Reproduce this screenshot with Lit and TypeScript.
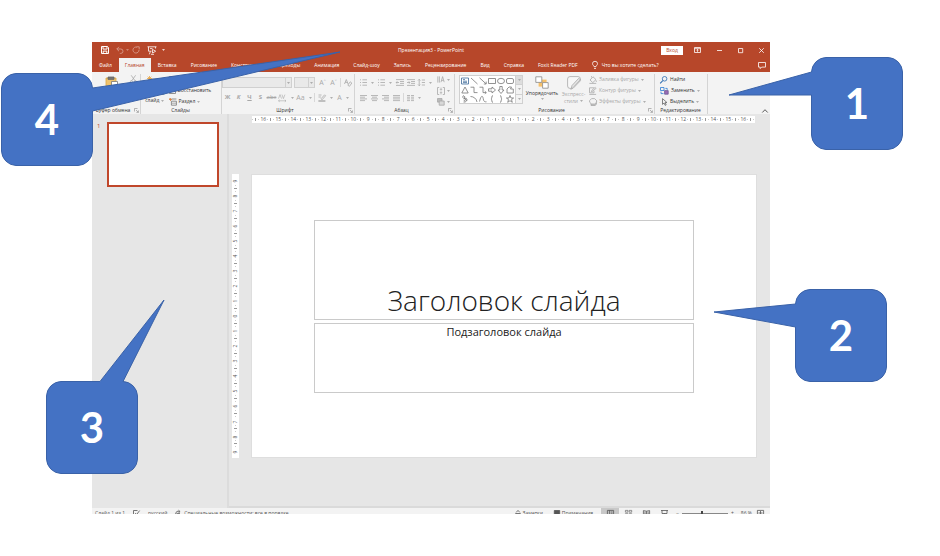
import { LitElement, html, svg, css, nothing, TemplateResult } from "lit";
import { customElement } from "lit/decorators.js";

const base = css`
  * { box-sizing: border-box; }
  button, select, input { font: inherit; color: inherit; margin: 0; padding: 0; border: 0; background: none; border-radius: 0; }
  svg { display: block; flex: none; fill: none; stroke: currentColor; overflow: visible; }
  button { display: flex; align-items: center; white-space: nowrap; flex: none; line-height: 7px; }
`;

const ico = (w: number, h: number, body: TemplateResult, cls = "") =>
  html`<svg class=${cls} width=${w} height=${h} viewBox="0 0 ${w} ${h}" stroke-width="0.8" aria-hidden="true">${body}</svg>`;
const caret = ico(3, 2, svg`<path d="M0 0.2h3L1.5 1.8z" fill="currentColor" stroke="none"/>`, "caret");

const I = {
  save: ico(8, 8, svg`<path d="M0.5 0.5h6l1 1v6h-7z M2 0.5v2.6h4v-2.6 M2.2 7.5v-2.4h3.6v2.4" stroke-width="1"/>`),
  undo: ico(8, 8, svg`<path d="M3 0.8L0.8 3l2.2 2.2 M0.8 3h4a2.2 2.2 0 0 1 0 4.4h-1" stroke-width="0.9"/>`),
  redo: ico(8, 8, svg`<path d="M5 1.2a3 3 0 1 0 2 2.8 M4.6 0.8h2.6v2.6" stroke-width="0.9"/>`),
  show: ico(10, 9, svg`<path d="M0.5 0.8h9 M1.5 0.8v4.4h3 M8.5 0.8v1.700 M3.400 5.500l-1 2.800 M3 2.600h2.500"/><path d="M5.500 3.400l3.200 1.800-3.200 1.800z"/><path d="M4 8.300h3" />`),
  display: ico(7, 6, svg`<path d="M0.5 0.5h6v5h-6z M0.5 1.7h6 M3.5 4.8v-2.2 M2.5 3.4l1-1 1 1"/>`),
  min: ico(5, 5, svg`<path d="M0 2.5h5"/>`),
  max: ico(5, 5, svg`<path d="M0.5 0.5h4.2v4.2h-4.2z"/>`),
  close: ico(5, 5, svg`<path d="M0.2 0.2l4.6 4.6M4.8 0.2l-4.6 4.6"/>`),
  bulb: ico(6, 8, svg`<path d="M2 5.6c0-1-1.5-1.4-1.5-3a2.5 2.3 0 0 1 5 0c0 1.6-1.5 2-1.5 3z M2 7.4h2"/>`),
  comment: ico(8, 7, svg`<path d="M0.5 0.5h7v4.6h-3.8l-1.5 1.5v-1.5h-1.7z"/>`),
  paste: ico(14, 14, svg`<path d="M1 2h10v11h-10z" fill="#f0c36d" stroke="#d9a441"/><path d="M3 1h6v2.4h-6z" fill="#777" stroke="#666"/><path d="M6.5 5.5h6v8h-6z" fill="#fff" stroke="#777"/>`),
  cut: ico(7, 8, svg`<path d="M1.2 0.3l3.8 5.4M5.6 0.3l-3.8 5.4"/><circle cx="1.4" cy="6.6" r="1"/><circle cx="5.4" cy="6.6" r="1"/>`),
  slide: ico(15, 14, svg`<path d="M2.5 3h12v9h-12z" fill="#fff" stroke="#888"/><path d="M4.5 5.5h8M4.5 8h8" stroke="#888"/><path d="M2.5 0v5M0 2.5h5M0.7 0.7l3.6 3.6M4.3 0.7l-3.6 3.6" stroke="#e8a33d"/>`),
  layout: ico(7, 7, svg`<path d="M0.5 0.5h6v5.5h-6zM0.5 2.2h6M3.5 2.2v3.8" stroke="#777"/>`),
  reset: ico(7, 7, svg`<path d="M0.5 2.5h6v4h-6z" stroke="#777"/><path d="M4.5 0.5a2 2 0 0 0-3 1" stroke="#2b7cd3"/>`),
  section: ico(8, 8, svg`<path d="M2.4 1h5M2.4 3.2h5v4h-5z" stroke="#777"/><path d="M2.4 5.2h5" stroke="#999"/><path d="M0 0.5l1.5 1M1.5 0v3M0 1.5h3" stroke="#d9803d"/>`),
  clear: ico(8, 8, svg`<path d="M0.5 5l1.8-4.5 1.8 4.5M1.2 3.4h2.2"/><path d="M3.8 6.2l2.4-3.4 1.6 1.2-2.3 3.3z"/>`),
  spacing: ico(9, 8, svg`<path d="M0.5 4.6l1.5-4 1.5 4M4 0.6l1.4 4 1.5-4M0.5 6.8h7.5M1.7 5.8l-1.2 1 1.2 1M6.8 5.8l1.2 1-1.2 1" stroke-width="0.6"/>`),
  pen: ico(8, 8, svg`<path d="M0.5 1h3M0.5 3h2.4M3 4.8l3.6-4 1 1-3.6 4z"/><path d="M0.4 7h7" stroke-width="1.4"/>`),
  bullets: ico(7, 7, svg`<path d="M0 0.8h1M0 3.5h1M0 6.2h1M2.4 0.8h4.6M2.4 3.5h4.6M2.4 6.2h4.6"/>`),
  indent: ico(8, 7, svg`<path d="M0 0.6h8M4 2.5h4M4 4.4h4M0 6.4h8M3 3.5h-3M1.3 2.3l-1.2 1.2 1.2 1.2"/>`),
  outdent: ico(8, 7, svg`<path d="M0 0.6h8M4 2.5h4M4 4.4h4M0 6.4h8M0 3.5h3M1.8 2.3l1.2 1.2-1.2 1.2"/>`),
  lines: ico(7, 7, svg`<path d="M1.2 0.3v6.4M0 1.5l1.2-1.2 1.2 1.2M0 5.5l1.2 1.2 1.2-1.2M3.8 1h3.2M3.8 3.5h3.2M3.8 6h3.2"/>`),
  left: ico(7, 6, svg`<path d="M0 0.5h7M0 2.2h5M0 3.9h7M0 5.6h5"/>`),
  center: ico(7, 6, svg`<path d="M0 0.5h7M1 2.2h5M0 3.9h7M1 5.6h5"/>`),
  right: ico(7, 6, svg`<path d="M0 0.5h7M2 2.2h5M0 3.9h7M2 5.6h5"/>`),
  just: ico(7, 6, svg`<path d="M0 0.5h7M0 2.2h7M0 3.9h7M0 5.6h7"/>`),
  cols: ico(7, 6, svg`<path d="M0 0.5h3M0 2.2h3M0 3.9h3M0 5.6h3M4 0.5h3M4 2.2h3M4 3.9h3M4 5.6h3"/>`),
  tdir: ico(8, 7, svg`<path d="M0.8 0.4v6.2M2.4 0.4v6.2M4 6.2l1.6-5.6 1.6 5.6M4.5 4.4h2.2"/>`),
  valign: ico(8, 8, svg`<path d="M2.2 0.5h-1.7v7h1.7M5.8 0.5h1.7v7h-1.7M4 0.6v2.6M3 2.2l1 1 1-1M4 7.4v-2.6M3 5.8l1-1 1 1"/>`),
  smart: ico(8, 8, svg`<path d="M0.5 0.5h4.5v3.6h-4.5z" fill="#bbb"/><path d="M2.2 3h5v4.2h-5z" fill="#d8d8d8"/>`),
  arrange: ico(14, 13, svg`<path d="M3.6 3.6h8v7h-8z" fill="#f5c06a" stroke="none"/><path d="M0.8 0.8h6v5.6h-6zM7.6 6.6h5.6v5.6h-5.6z" fill="#fff" stroke="#888"/>`),
  styles: ico(14, 14, svg`<path d="M10 0.6h-7a2.4 2.4 0 0 0-2.4 2.4v7a2.4 2.4 0 0 0 2.4 2.4h3l7.4-7.6v-1.8a2.4 2.4 0 0 0-2.4-2.4z" fill="#f7f7f7"/><path d="M13.5 3.5l-6.5 7-3 3 1-4 6.5-7z" fill="#e4e4e4"/>`),
  fill: ico(8, 8, svg`<path d="M1 4l3-3.2 3 2.8-3.2 3zM0.4 7.4h6.8M2.5 1.4v-1.2M7.3 4.5v1.4"/>`),
  outline: ico(8, 8, svg`<path d="M5 0.8h-4.5v5h4.5v-1.8M2.4 4.6l0.4-1.2 3.4-3 0.9 0.9-3.3 2.9zM0.3 7.4h6.8"/>`),
  effects: ico(8, 8, svg`<path d="M2 2.5h5.4v3.8l-1.4 1.2h-4z" fill="#c4c4c4"/><path d="M0.6 2.6l2-2h3l2 2v1.6l-2 1.8h-3l-2-1.8z" fill="#f3f3f3"/>`),
  find: ico(8, 8, svg`<circle cx="4.6" cy="2.8" r="2.3"/><path d="M2.9 4.5l-2.7 2.9" stroke-width="1.1"/>`, "blue"),
  replace: ico(9, 8, svg`<path d="M0.5 0.5h3.5v3h-3.5z" stroke="#2b7cd3"/><path d="M4.6 3.6h3.6v3.6h-3.6z" fill="#9a6bb5" stroke="#6b5b95"/><path d="M5.4 1.4h1.8v1.5M1 4.6v2h2.5" stroke="#2b7cd3"/>`),
  select: ico(8, 8, svg`<path d="M2.5 0.6v5.8l1.5-1.4 1.2 2.4 1-0.5-1.2-2.3h2z" stroke="#666"/>`),
  launcher: ico(5, 5, svg`<path d="M0.5 3.5v-3h3M2 2l2.3 2.3M4.4 2.4v2h-2" stroke-width="0.6"/>`),
  up: ico(6, 4, svg`<path d="M0.3 3.5l2.7-2.8 2.7 2.8"/>`),
  spell: ico(7, 7, svg`<path d="M4.5 0.5h-4v6h5v-2M2.2 3l1.4 1.6 3-4"/>`),
  access: ico(7, 7, svg`<path d="M4.5 1.5a3 3 0 1 0 2 3M3.5 0.2l1.6 1.4-1.6 1.2M1.5 3.4h3.5"/>`),
  notes: ico(6, 6, svg`<path d="M0.3 3.5h5.4M1.2 2.4l1.8-2 1.8 2M0.3 5.2h5.4"/>`),
  bubble: ico(6, 6, svg`<path d="M0.3 0.5h5.4v4h-3l-1.2 1.2v-1.2h-1.2z" fill="currentColor"/>`),
  v1: ico(7, 6, svg`<path d="M0.4 0.4h6.2v5.2h-6.2zM2.4 0.4v5.2M3.6 2h2M3.6 3.8h2"/>`),
  v2: ico(7, 6, svg`<path d="M0.4 0.4h2.5v1.8h-2.5zM4.2 0.4h2.5v1.8h-2.5zM0.4 3.7h2.5v1.8h-2.5zM4.2 3.7h2.5v1.8h-2.5z" stroke-width="0.6"/>`),
  v3: ico(7, 6, svg`<path d="M0.4 0.6l3.1 0.6 3.1-0.6v4.4l-3.1 0.6-3.1-0.6zM3.5 1.2v4.4M1.3 2.2h1.4M4.4 2.2h1.4M1.3 3.6h1.4M4.4 3.6h1.4"/>`),
  v4: ico(7, 6, svg`<path d="M0 0.5h7M1 0.5v3h5v-3M3.5 3.5v1.5"/>`),
  fit: ico(7, 6, svg`<path d="M0.4 0.4h6.2v5.2h-6.2zM3.5 1v4M1.4 3h4.2"/>`),
};

const shapes = [
  svg`<path d="M0.5 1h7v6h-7z" stroke="#3d6a99"/><path d="M2 2.6h2M2 4.2h4M2 5.6h4" stroke="#3d6a99"/>`,
  svg`<path d="M1 1l6.5 6"/>`,
  svg`<path d="M0.5 0.8l6.5 6M7.2 4.6v2.4h-2.4"/>`,
  svg`<path d="M0.5 1.5h7v5h-7z"/>`,
  svg`<ellipse cx="4" cy="4" rx="3.5" ry="2.7"/>`,
  svg`<rect x="0.5" y="1.5" width="7" height="5" rx="1.5"/>`,
  svg`<path d="M4 1l3.2 6h-6.4z"/>`,
  svg`<path d="M0.5 1.2h3.5v5.4h3.5"/>`,
  svg`<path d="M0.5 1.2h3.5v5.4h3.2M5.8 5.2l1.5 1.4-1.5 1.2"/>`,
  svg`<path d="M0.5 2.8h3.5v-1.8l3.5 3-3.5 3v-1.8h-3.5z"/>`,
  svg`<path d="M2.8 0.5v3.5h-1.8l3 3.5 3-3.5h-1.8v-3.5z"/>`,
  svg`<path d="M1 3l2-2h2.5l-1 2h2.8v4h-6.3z"/>`,
  svg`<path d="M3 0.5a1.5 1.5 0 1 0 1 2.8a1.5 1.5 0 1 1-1 1.4M4.5 7h-2M3.6 1v3l2.5 1.5"/>`,
  svg`<path d="M0.5 1.5c3 0 6 2 6.5 5.5"/>`,
  svg`<path d="M0.5 6.5c2-8 3.5-5 3.8-2.5s1.5 3 3.2 2.8"/>`,
  svg`<path d="M5 0.5c-1.8 0-0.5 3-2 3.5 1.5 0.5 0.2 3.5 2 3.5"/>`,
  svg`<path d="M3 0.5c1.8 0 0.5 3 2 3.5-1.5 0.5-0.2 3.5-2 3.5"/>`,
  svg`<path d="M4 0.5l1 2.5h2.6l-2.1 1.6 0.8 2.7-2.3-1.6-2.3 1.6 0.8-2.7-2.1-1.6h2.6z"/>`,
];

@customElement("title-bar")
class TitleBar extends LitElement {
  static styles = [base, css`
    :host { display: block; background: #b7472a; color: #fff; font-size: 5px; line-height: 7px; }
    .row { display: grid; grid-template-columns: 1fr auto 1fr; align-items: center; height: 16px; }
    .quick { display: flex; align-items: center; gap: 3px; padding-left: 9px; }
    .quick button { gap: 2px; min-width: 12px; }
    .dim { opacity: 0.45; }
    .wins { display: flex; justify-content: flex-end; align-items: center; padding-right: 6px; gap: 16px; }
    .login { background: #fff; color: #b7472a; height: 9px; width: 22px; justify-content: center; margin-right: -5px; }
    .tabs { display: flex; height: 14px; align-items: stretch; padding: 0 4px 0 0; }
    .tabs button { padding: 0 7px; }
    .tabs .on { background: #f3f3f3; color: #b7472a; padding: 0 6px; }
    .tabs .ask { gap: 4px; }
    .tabs .talk { margin-left: auto; padding: 0; }
  `];
  render() {
    const tabs = ["Файл", "Главная", "Вставка", "Рисование", "Конструктор", "Переходы", "Анимация", "Слайд-шоу", "Запись", "Рецензирование", "Вид", "Справка", "Foxit Reader PDF"];
    return html`
      <header class="row">
        <div class="quick">
          <button aria-label="Сохранить">${I.save}</button>
          <button class="dim" aria-label="Отменить">${I.undo}${caret}</button>
          <button class="dim" aria-label="Вернуть">${I.redo}</button>
          <button aria-label="Показ слайдов">${I.show}</button>
          <button aria-label="Настройка">${caret}</button>
        </div>
        <span>Презентация3 - PowerPoint</span>
        <div class="wins">
          <button class="login">Вход</button>
          <button aria-label="Лента">${I.display}</button>
          <button aria-label="Свернуть">${I.min}</button>
          <button aria-label="Развернуть">${I.max}</button>
          <button aria-label="Закрыть">${I.close}</button>
        </div>
      </header>
      <nav class="tabs">
        ${tabs.map((t) => html`<button class=${t === "Главная" ? "on" : ""}>${t}</button>`)}
        <button class="ask">${I.bulb}Что вы хотите сделать?</button>
        <button class="talk" aria-label="Примечания">${I.comment}</button>
      </nav>`;
  }
}

@customElement("ribbon-bar")
class RibbonBar extends LitElement {
  static styles = [base, css`
    :host { display: grid; grid-template-columns: 49fr 81fr 133fr 100fr 200fr 53fr 62fr; height: 42px; padding-top: 2px;
      background: #f3f3f3; color: #333; font-size: 5px; line-height: 7px; }
    .group { display: flex; flex-direction: column; border-right: 1px solid #d4d4d4; min-width: 0; }
    .body { display: flex; height: 33px; }
    .name { display: flex; align-items: center; height: 7px; padding-right: 1px; }
    .name span { flex: 1; text-align: center; white-space: nowrap; }
    .name button { color: #888; }
    .off { color: #a8a8a8; }
    .big { flex-direction: column; gap: 1px; padding-top: 2px; }
    .rows { display: grid; grid-template-rows: repeat(3, 1fr); align-items: center; }
    .rows button { gap: 2px; }
    .two { display: flex; flex-direction: column; gap: 4px; padding-top: 3px; }
    .line { display: flex; align-items: center; height: 11px; }
    .b { width: 11px; justify-content: center; font-size: 6px; }
    .d { width: 18px; justify-content: center; gap: 4px; }
    .caret { color: #999; }
    .pipe { width: 1px; height: 9px; background: #d8d8d8; margin: 0 1px; }
    .clipboard { padding-left: 9px; gap: 7px; }
    .clipboard .rows button { align-self: start; padding-top: 1px; }
    .slides { padding-left: 4px; gap: 4px; }
    .new { gap: 0; }
    .new span { display: flex; align-items: center; gap: 2px; }
    .combo { display: flex; height: 11px; border: 1px solid #d0d0d0; background: #e9e9e9; margin-right: 2px; }
    .combo select { appearance: none; width: 100%; }
    .combo i { display: flex; align-items: center; justify-content: center; width: 6px; flex: none; border-left: 1px solid #d0d0d0; }
    .face { width: 70px; }
    .size { width: 21px; }
    .k { font-weight: 700; }
    .it { font-style: italic; }
    .un { text-decoration: underline; }
    .st { text-decoration: line-through; }
    .lg { font-size: 7px; }
    .para { padding-left: 3px; }
    .draw { padding-left: 4px; }
    .gallery { display: flex; width: 64px; height: 29px; margin-top: 1px; border: 1px solid #d0d0d0; background: #fff; color: #777; }
    .cells { flex: 1; display: grid; grid-template-columns: repeat(6, 1fr); grid-template-rows: repeat(3, 1fr); place-items: center; }
    .scroll { display: grid; width: 7px; background: #f3f3f3; border-left: 1px solid #d0d0d0; }
    .scroll button { justify-content: center; border-bottom: 1px solid #d0d0d0; }
    .scroll button:first-child { background: #ddd; }
    .scroll button:last-child { border-bottom: 0; }
    .arr { margin-left: 2px; width: 34px; }
    .exp { width: 29px; margin-right: 1px; }
    .exp span { display: flex; align-items: center; gap: 2px; line-height: 6px; }
    .edit { padding-left: 5px; }
    .blue { color: #2b6cb0; }
    .end { display: flex; justify-content: flex-end; align-items: flex-end; padding: 0 2px 1px 0; }
  `];

  group(name: string, cls: string, body: TemplateResult, launcher = true) {
    return html`<section class="group"><div class="body ${cls}">${body}</div>
      <div class="name"><span>${name}</span>${launcher ? html`<button aria-label="${name}: параметры">${I.launcher}</button>` : nothing}</div></section>`;
  }
  b(label: string, content: unknown, cls = "") {
    return html`<button class="b ${cls}" aria-label=${label}>${content}</button>`;
  }
  d(label: string, content: unknown, cls = "") {
    return html`<button class="d ${cls}" aria-label=${label}>${content}${caret}</button>`;
  }

  render() {
    return html`
      ${this.group("Буфер обмена", "clipboard", html`
        <button class="big">${I.paste}<span>Вставить</span></button>
        <div class="rows off"><button aria-label="Вырезать">${I.cut}</button></div>`)}
      ${this.group("Слайды", "slides", html`
        <button class="big new">${I.slide}<span>Создать</span><span>слайд ${caret}</span></button>
        <div class="rows">
          <button>${I.layout}Макет${caret}</button>
          <button>${I.reset}Восстановить</button>
          <button>${I.section}Раздел${caret}</button>
        </div>`, false)}
      ${this.group("Шрифт", "off", html`
        <div class="two">
          <div class="line">
            <label class="combo face"><select aria-label="Шрифт"></select><i>${caret}</i></label>
            <label class="combo size"><select aria-label="Размер"></select><i>${caret}</i></label>
            ${this.b("Увеличить", "A\u02c4", "lg")}${this.b("Уменьшить", "A\u02c5", "lg")}
            <span class="pipe"></span>${this.b("Очистить", I.clear)}
          </div>
          <div class="line">
            ${this.b("Полужирный", "Ж", "k")}${this.b("Курсив", "К", "it k")}${this.b("Подчеркнутый", "Ч", "un k")}${this.b("Тень", "S", "k")}${this.b("Зачеркнутый", "abc", "st")}
            ${this.d("Интервал", I.spacing)}${this.d("Регистр", "Aa", "lg")}<span class="pipe"></span>
            ${this.d("Выделение", I.pen)}${this.d("Цвет", "A", "lg")}
          </div>
        </div>`)}
      ${this.group("Абзац", "off para", html`
        <div class="two">
          <div class="line">${this.d("Маркеры", I.bullets)}${this.d("Нумерация", I.bullets)}${this.b("Уменьшить отступ", I.indent)}${this.b("Увеличить отступ", I.outdent)}${this.d("Интервал", I.lines)}</div>
          <div class="line">${this.b("Слева", I.left)}${this.b("По центру", I.center)}${this.b("Справа", I.right)}${this.b("По ширине", I.just)}<span class="pipe"></span>${this.d("Колонки", I.cols)}</div>
        </div>
        <div class="rows">${this.d("Направление", I.tdir)}${this.d("Выравнивание", I.valign)}${this.d("SmartArt", I.smart)}</div>`)}
      ${this.group("Рисование", "draw", html`
        <div class="gallery">
          <div class="cells">${shapes.map((s) => ico(8, 8, s))}</div>
          <div class="scroll">${["Вверх", "Вниз", "Все"].map((l) => html`<button aria-label=${l}>${caret}</button>`)}</div>
        </div>
        <button class="big arr">${I.arrange}<span>Упорядочить</span>${caret}</button>
        <button class="big exp off">${I.styles}<span>Экспресс-</span><span>стили ${caret}</span></button>
        <div class="rows off">
          <button>${I.fill}Заливка фигуры ${caret}</button>
          <button>${I.outline}Контур фигуры ${caret}</button>
          <button>${I.effects}Эффекты фигуры ${caret}</button>
        </div>`)}
      ${this.group("Редактирование", "edit", html`
        <div class="rows">
          <button>${I.find}Найти</button>
          <button>${I.replace}Заменить ${caret}</button>
          <button>${I.select}Выделить ${caret}</button>
        </div>`, false)}
      <div class="end"><button aria-label="Свернуть ленту">${I.up}</button></div>`;
  }
}

@customElement("ruler-strip")
class RulerStrip extends LitElement {
  static properties = { max: { type: Number }, vertical: { type: Boolean, reflect: true } };
  declare max: number;
  declare vertical: boolean;
  static styles = css`
    :host { display: flex; background: #fff; color: #555; font: 5px/7px "Open Sans", sans-serif; height: 7px; }
    span { flex: 1 1 0; display: flex; align-items: center; justify-content: center; min-width: 0; min-height: 0; }
    .tick { gap: 2px; }
    .tick::before, .tick::after { content: ""; width: 1px; height: 1px; background: #ccc; }
    i { width: 1px; height: 3px; background: #999; }
    :host([vertical]) { flex-direction: column; width: 7px; height: auto; padding: 3px 0; }
    :host([vertical]) .tick { flex-direction: column; }
    :host([vertical]) i { width: 3px; height: 1px; }
    :host([vertical]) .num { writing-mode: vertical-rl; transform: rotate(180deg); }
  `;
  render() {
    const nums = Array.from({ length: this.max * 2 + 1 }, (_, k) => Math.abs(k - this.max));
    const tick = html`<span class="tick"><i></i></span>`;
    return html`${this.vertical ? nothing : tick}${nums.map((n, k) => html`${k ? tick : nothing}<span class="num">${n}</span>`)}${this.vertical ? nothing : tick}`;
  }
}

@customElement("status-bar")
class StatusBar extends LitElement {
  static styles = [base, css`
    :host { display: block; height: 6px; overflow: hidden; background: #f3f3f3; color: #555; font-size: 5px; line-height: 7px; }
    .row { display: flex; align-items: center; height: 10px; padding: 0 6px 0 3px; white-space: nowrap; }
    .row button { gap: 2px; }
    .lang { margin: 0 8px; }
    .right { display: flex; align-items: center; margin-left: auto; }
    .memo { margin-right: 11px; }
    .note { margin-right: 8px; }
    .view { width: 18px; height: 10px; justify-content: center; }
    .view.on { background: #c8c8c8; }
    .zoom { appearance: none; width: 46px; height: 6px; margin: 0 3px; background: linear-gradient(#888, #888) center / 100% 1px no-repeat; }
    .zoom::-webkit-slider-thumb { appearance: none; width: 2px; height: 5px; background: #444; }
    .pct { margin: 0 5px 0 7px; }
    .minus { margin-left: 3px; }
  `];
  render() {
    return html`<footer class="row">
      <span>Слайд 1 из 1</span>
      <button class="lang" aria-label="Правописание">${I.spell}</button>
      <button>русский</button>
      <button class="lang">${I.access}Специальные возможности: все в порядке</button>
      <div class="right">
        <button class="memo">${I.notes}Заметки</button>
        <button class="note">${I.bubble}Примечания</button>
        <button class="view on" aria-label="Обычный">${I.v1}</button>
        <button class="view" aria-label="Сортировщик">${I.v2}</button>
        <button class="view" aria-label="Чтение">${I.v3}</button>
        <button class="view" aria-label="Показ">${I.v4}</button>
        <button class="minus">−</button>
        <input class="zoom" type="range" min="0" max="100" value="44" aria-label="Масштаб" />
        <button>+</button>
        <span class="pct">86 %</span>
        <button aria-label="По размеру окна">${I.fit}</button>
      </div>
    </footer>`;
  }
}

@customElement("call-out")
class CallOut extends LitElement {
  static properties = { label: {}, outline: {} };
  declare label: string;
  declare outline: string;
  static styles = css`
    :host { display: block; width: 92px; height: 93px; }
    svg { display: block; width: 100%; height: 100%; overflow: visible; }
    path { fill: #4472c4; stroke: #3a62a8; stroke-width: 1; stroke-linejoin: round; }
    text { fill: #fff; font: 700 42px Lato, "Open Sans", sans-serif; text-anchor: middle; }
  `;
  render() {
    return html`<svg viewBox="0 0 92 93"><path d=${this.outline}></path><text x="46" y="62">${this.label}</text></svg>`;
  }
}

const leftTail = (y1: number, tip: string, y2: number) =>
  `M15 0.5H77A15 15 0 0 1 91.5 15V78A15 15 0 0 1 77 92.5H15A15 15 0 0 1 0.5 78V${y2}L${tip}L0.5 ${y1}V15A15 15 0 0 1 15 0.5Z`;

@customElement("app-root")
class AppRoot extends LitElement {
  static styles = css`
    * { box-sizing: border-box; }
    :host { display: block; position: relative; min-height: 100vh; padding: 42px 170px 42px 92px; box-sizing: border-box;
      background: #fff; font-family: "Open Sans", "Noto Sans", sans-serif; overflow: hidden; }
    .work { display: grid; grid-template-columns: 137px 1fr; background: #e6e6e6; }
    .thumbs { display: grid; grid-template-columns: 5px 1fr; align-items: start; gap: 5px; padding: 8px 8px 0 5px;
      border-right: 2px solid #dcdcdc; color: #c0472b; font-size: 6px; line-height: 8px; }
    .thumb { aspect-ratio: 112 / 65; background: #fff; border: 2px solid #c0472b; border-radius: 0; padding: 0; margin: 0; }
    .stage { display: grid; grid-template-columns: 7px 1fr; column-gap: 12px; padding: 2px 13px 0 3px; border-bottom: 2px solid #dadada; }
    .across { grid-column: 2; margin: 0 2px 0 1px; }
    .down { margin: 51px 0 48px; }
    .slide { display: flex; flex-direction: column; gap: 3px; margin: 51px 0 48px; padding: 45px 62px 64px; background: #fff; border: 1px solid #dedede; color: #222; }
    .title, .sub { display: flex; justify-content: center; margin: 0; border: 1px solid #cacaca; white-space: nowrap; }
    .title { align-items: flex-end; height: 100px; font-weight: 300; font-size: 28px; line-height: 38px; }
    .sub { height: 70px; font-weight: 400; font-size: 11px; line-height: 15px; }
    .across, .down, .slide { position: static; }
    .c1, .c2, .c3, .c4 { position: absolute; }
    .c1 { right: 37px; top: 57px; }
    .c2 { right: 53px; top: 289px; }
    .c3 { left: 46px; top: 381px; }
    .c4 { left: 1px; top: 73px; }
  `;
  render() {
    return html`
      <title-bar></title-bar>
      <ribbon-bar></ribbon-bar>
      <main class="work">
        <aside class="thumbs"><span>1</span><button class="thumb" aria-label="Слайд 1"></button></aside>
        <section class="stage">
          <ruler-strip class="across" .max=${16}></ruler-strip>
          <ruler-strip class="down" .max=${9} vertical></ruler-strip>
          <article class="slide">
            <h1 class="title">Заголовок слайда</h1>
            <h2 class="sub">Подзаголовок слайда</h2>
          </article>
        </section>
      </main>
      <status-bar></status-bar>
      <call-out class="c1" label="1" outline=${leftTail(15, "-82 38", 38)}></call-out>
      <call-out class="c2" label="2" outline=${leftTail(15, "-81 23", 38)}></call-out>
      <call-out class="c3" label="3" outline="M15 0.5H54L118 -81L77 0.5A15 15 0 0 1 91.5 15V78A15 15 0 0 1 77 92.5H15A15 15 0 0 1 0.5 78V15A15 15 0 0 1 15 0.5Z"></call-out>
      <call-out class="c4" label="4" outline="M15 0.5H77A15 15 0 0 1 91.5 15L339 -21L91.5 38V78A15 15 0 0 1 77 92.5H15A15 15 0 0 1 0.5 78V15A15 15 0 0 1 15 0.5Z"></call-out>`;
  }
}
